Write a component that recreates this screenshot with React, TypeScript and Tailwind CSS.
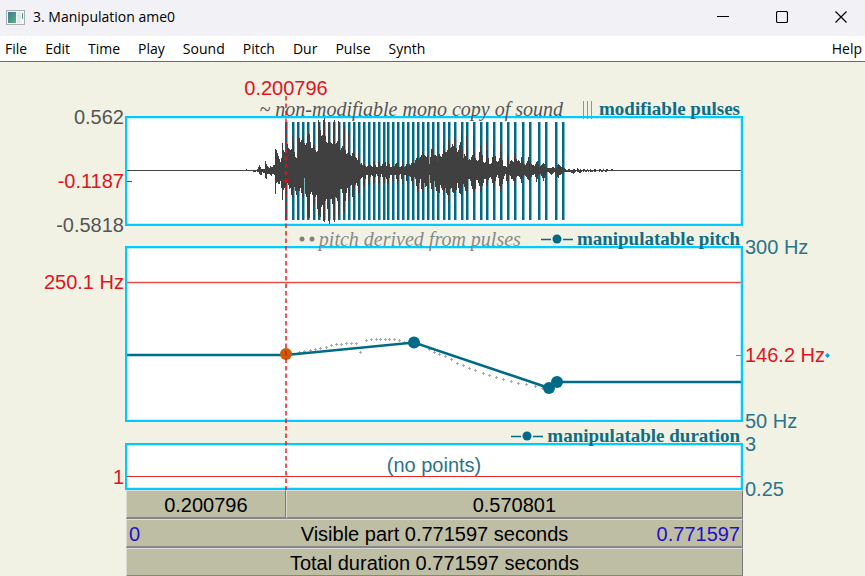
import type { ReactNode } from 'react';

const SANS = "font-['Liberation_Sans',Arial,sans-serif]";
const SERIF = "font-['Liberation_Serif','Times_New_Roman',serif]";

const MENUS = ['File', 'Edit', 'Time', 'Play', 'Sound', 'Pitch', 'Dur', 'Pulse', 'Synth'];

const PLOT_WIDTH = 618;
const CURSOR_X = 161;
const cursorLeft = `${(CURSOR_X / PLOT_WIDTH) * 100}%`;
const beforeCursor = `${((CURSOR_X - 1) / PLOT_WIDTH) * 100}%`;

// glottal pulse positions, in plot units
const PULSES = [
  160, 167, 172, 177, 182, 188, 193, 198, 203, 208, 213, 218, 223, 228, 233, 238, 243, 248, 253, 258, 262, 267, 272,
  277, 282, 287, 292, 297, 302, 307, 312, 318, 323, 329, 336, 341, 348, 355, 361, 368, 375, 382, 389, 397, 404, 413,
  420, 430, 437,
];

// first column of the sampled waveform
const WAVE_START = 132;

const WAVE_UP = [
  1, 3, 5, 3, 1, 1, 1, 1, 9, 6, 4, 3, 2, 4, 3, 3, 5, 5, 21, 20, 17, 14, 11, 8, 12, 27, 20, 18, 17, 17, 26, 22, 21, 20,
  21, 34, 28, 18, 13, 12, 13, 33, 32, 28, 30, 31, 33, 27, 25, 27, 34, 38, 36, 28, 22, 22, 25, 25, 20, 18, 19, 50, 48,
  40, 34, 35, 50, 52, 34, 28, 27, 48, 45, 28, 27, 26, 48, 50, 26, 27, 29, 49, 46, 20, 22, 24, 23, 43, 20, 16, 17, 38,
  18, 15, 14, 17, 32, 18, 13, 12, 10, 14, 10, 6, 7, 5, 4, 6, 4, 3, 4, 5, 8, 5, 4, 3, 8, 9, 5, 3, 3, 8, 9, 4, 4, 6, 9,
  7, 8, 4, 6, 9, 6, 3, 3, 4, 3, 4, 6, 7, 8, 5, 3, 3, 4, 8, 5, 3, 4, 6, 7, 4, 6, 5, 7, 10, 8, 7, 10, 12, 13, 10, 12,
  13, 15, 18, 17, 15, 14, 13, 16, 14, 6, 13, 21, 22, 20, 15, 15, 14, 8, 16, 16, 14, 13, 16, 25, 20, 18, 18, 20, 30,
  25, 22, 23, 26, 24, 32, 23, 22, 18, 20, 25, 28, 37, 20, 12, 16, 14, 35, 22, 10, 11, 10, 13, 15, 34, 18, 12, 10, 9,
  10, 18, 25, 20, 15, 8, 7, 8, 29, 20, 12, 6, 6, 7, 13, 22, 14, 14, 9, 8, 9, 12, 26, 18, 10, 4, 4, 4, 3, 16, 13, 6,
  9, 10, 9, 8, 17, 13, 11, 9, 10, 9, 7, 13, 9, 6, 6, 5, 7, 9, 13, 10, 7, 6, 5, 5, 4, 6, 8, 9, 5, 3, 4, 5, 6, 7, 6,
  4, 3, 2, 2, 2, 2, 2, 3, 3, 2, 1, 2, 5, 6, 5, 4, 3, 3, 2, 2, 1, 0, 0, 1, 1, 0, 0, 0, 1, 1, 0, 0, 2, 1, 0, 1, 0, 0,
  1, 1, 0, 0, 1, 0, 0, 1, 0, 0, 0, 1, 1, 0, 0, 0, 1, 1, 0, 0, 1, 0, 0, 1, 1, 0, 0, 0, 1, 1,
];

const WAVE_DOWN = [
  1, 1, 3, 4, 4, 1, 2, 2, 7, 8, 3, 3, 3, 4, 5, 3, 3, 4, 23, 12, 11, 13, 13, 10, 17, 29, 19, 17, 18, 22, 12, 14, 18,
  17, 24, 26, 19, 16, 20, 24, 18, 20, 20, 17, 22, 26, 27, 7, 23, 26, 45, 48, 47, 23, 21, 24, 40, 34, 26, 24, 38, 45,
  44, 46, 36, 34, 50, 51, 30, 28, 38, 50, 54, 28, 28, 33, 38, 51, 26, 27, 30, 46, 40, 18, 18, 22, 40, 42, 30, 22, 17,
  30, 25, 15, 14, 26, 28, 18, 14, 12, 15, 24, 22, 8, 7, 6, 14, 16, 8, 4, 4, 13, 15, 6, 4, 5, 12, 12, 6, 3, 5, 14, 12,
  6, 3, 6, 11, 12, 6, 8, 14, 13, 7, 4, 4, 10, 9, 4, 4, 8, 13, 10, 4, 3, 8, 13, 6, 4, 4, 10, 11, 5, 5, 6, 10, 15, 9,
  6, 8, 15, 18, 20, 12, 8, 18, 21, 17, 12, 16, 15, 20, 17, 4, 12, 18, 20, 15, 10, 16, 20, 20, 21, 22, 14, 17, 19, 24,
  20, 17, 22, 24, 31, 24, 18, 17, 21, 22, 21, 24, 19, 12, 17, 22, 23, 25, 15, 13, 16, 20, 23, 20, 8, 8, 10, 15, 18,
  22, 20, 18, 9, 9, 12, 15, 21, 22, 15, 12, 8, 8, 14, 15, 9, 7, 6, 8, 12, 18, 15, 10, 6, 4, 7, 15, 21, 17, 13, 8, 5,
  3, 10, 14, 10, 4, 5, 8, 8, 10, 15, 10, 6, 5, 5, 6, 8, 12, 7, 5, 4, 5, 6, 8, 9, 10, 7, 6, 4, 4, 3, 6, 11, 8, 4, 3,
  3, 5, 7, 10, 7, 4, 2, 1, 1, 2, 3, 4, 3, 2, 1, 2, 4, 6, 7, 4, 4, 3, 3, 2, 1, 1, 1, 1, 1, 1, 1, 2, 2, 3, 2, 1, 0, 1,
  1, 2, 2, 1, 0, 1, 0, 1, 1, 0, 1, 0, 1, 1, 1, 0, 1, 1, 0, 0, 0, 1, 0, 1, 1, 0, 0, 1, 1, 0, 0,
];

const wavePath = WAVE_UP.map((up, i) => {
  const down = WAVE_DOWN[i] ?? 0;
  return `M${WAVE_START + i} ${54 - up}h1v${up + down + 1}h-1z`;
}).join('');

// pitch candidates measured between neighbouring pulses
const PITCH_DOTS = [
  [174, 106], [179, 105], [185, 104], [190, 103], [195, 102], [201, 101], [206, 99], [211, 98], [216, 98], [221, 97],
  [226, 97], [231, 97], [235, 106], [241, 94], [246, 93], [251, 93], [255, 93], [260, 93], [264, 93], [269, 93],
  [274, 94], [279, 96], [304, 103], [309, 106], [314, 108], [320, 110], [326, 113], [332, 117], [338, 119], [344, 122],
  [350, 124], [358, 127], [364, 129], [371, 131], [378, 133], [386, 135], [393, 137], [401, 138], [410, 140], [417, 142],
];

interface ChildrenProps {
  children: ReactNode;
}

const Legend = ({ children }: ChildrenProps) => (
  <div
    className={`relative z-10 col-start-2 flex items-end justify-end gap-5 whitespace-nowrap pr-[3px] text-[20px] leading-[14px] ${SERIF}`}
  >
    {children}
  </div>
);

const PointSymbol = () => (
  <svg className="h-[10px] w-8" viewBox="0 0 32 10" aria-hidden="true">
    <path d="M0 5.5h10M22 5.5h10" stroke="#006b87" strokeWidth="1.5" />
    <circle cx="16" cy="5" r="4.5" fill="#006b87" />
  </svg>
);

const Panel = ({ height, label, children }: ChildrenProps & { height: number; label: string }) => (
  <svg
    className="col-start-2 block w-full bg-white"
    height={height}
    viewBox={`0 0 ${PLOT_WIDTH} ${height}`}
    preserveAspectRatio="none"
    role="img"
    aria-label={label}
  >
    {children}
    <rect x="1" y="1" width={PLOT_WIDTH - 2} height={height - 2} fill="none" stroke="#00cbff" strokeWidth="2.5" />
  </svg>
);

const LeftScale = ({ children }: ChildrenProps) => (
  <div className="col-start-1 -my-[9px] flex flex-col items-end pr-px">{children}</div>
);

const RightScale = ({ children }: ChildrenProps) => (
  <div className="col-start-3 -my-[9px] flex flex-col items-start pl-[2px] text-[#2b7489]">{children}</div>
);

const BAR =
  'h-[29px] border-b-2 border-l border-r border-t border-b-[#85858a] border-l-[#dcdcd4] border-r-[#77777f] border-t-[#dcdcd4] bg-[#bebea5] pt-[2px] leading-6';

const App = () => {
  return (
    <div className="flex min-h-screen flex-col bg-[#f2f2e4] text-black">
      <header className="flex h-9 items-center bg-[#f2f1f6] pl-[6px] font-['Open_Sans','Noto_Sans',sans-serif]">
        <svg className="h-4 w-[19px]" viewBox="0 0 19 16" aria-hidden="true">
          <defs>
            <linearGradient id="thumb" x1="0" y1="0" x2="1" y2="1">
              <stop offset="0" stopColor="#3f7899" />
              <stop offset="1" stopColor="#5fae7e" />
            </linearGradient>
          </defs>
          <rect x="0.5" y="0.5" width="18" height="14" fill="#f4f7f8" stroke="#a8adb0" />
          <rect x="2" y="2" width="8" height="11" fill="url(#thumb)" />
          <rect x="11" y="2" width="4" height="11" fill="#e3e8ec" />
          <path d="M16.5 3v6" stroke="#4a9a86" />
        </svg>
        <h1 className="ml-2 grow pb-[2px] text-sm">3. Manipulation ame0</h1>
        <div className="flex items-center gap-[47px] pr-[18px] pb-[2px]">
          <button type="button" aria-label="Minimize">
            <svg className="block size-3" viewBox="0 0 12 12">
              <path d="M0 5.5h12" stroke="#000" />
            </svg>
          </button>
          <button type="button" aria-label="Maximize">
            <svg className="block size-3" viewBox="0 0 12 12">
              <rect x="0.5" y="0.5" width="11" height="11" rx="1.5" fill="none" stroke="#000" strokeWidth="1.2" />
            </svg>
          </button>
          <button type="button" aria-label="Close">
            <svg className="block size-3" viewBox="0 0 12 12">
              <path d="M0.5 0.5l11 11M11.5 0.5l-11 11" stroke="#000" strokeWidth="1.2" />
            </svg>
          </button>
        </div>
      </header>

      <nav className="flex h-[26px] items-center gap-[18px] border-b border-[#6c6c70] bg-white pl-[5px] pr-[3px] font-['Open_Sans','Noto_Sans',sans-serif] text-sm">
        {MENUS.map((name) => (
          <button key={name} type="button">
            {name}
          </button>
        ))}
        <button type="button" className="ml-auto">
          Help
        </button>
      </nav>

      <main className={`relative text-[20px] leading-5 ${SANS}`}>
        <div className="grid grid-cols-[125px_1fr_122px] grid-rows-[54px_110px_20px_176px_21px_47px]">
          <Legend>
            <span className="italic text-[#555]">~ non-modifiable mono copy of sound</span>
            <span className="flex gap-[6px] text-[19px] font-bold text-[#0f6c85]">
              <svg className="h-[14px] w-[10px] overflow-visible" viewBox="0 0 10 14" aria-hidden="true">
                <path d="M0.5 -1v18M4.5 -1v18M8.5 -1v18" stroke="#6f9fb0" />
              </svg>
              modifiable pulses
            </span>
          </Legend>

          <LeftScale>
            <span className="text-[#555]">0.562</span>
            <span className="mt-[44px] text-[#e0141e]">-0.1187</span>
            <span className="mt-auto text-[#555]">-0.5818</span>
          </LeftScale>
          <Panel height={110} label="Sound with pulses">
            {PULSES.map((x) => (
              <rect key={x} x={x} y="6" width="2.5" height="98" fill="#006b87" />
            ))}
            <path d={`M2 54.5h${PLOT_WIDTH - 4}`} stroke="#444" />
            <path d="M121 53h1v2h-1zM128 54h3v2h-3z" fill="#404040" />
            <path d={wavePath} fill="#404040" />
            <path d="M2 65.5h5M158 64.5h6" stroke="#d01414" />
          </Panel>

          <Legend>
            <span className="flex items-center gap-1 italic text-[#888]">
              <svg className="h-[6px] w-4" viewBox="0 0 16 6" aria-hidden="true">
                <circle cx="3" cy="3" r="2.5" fill="#808080" />
                <circle cx="13" cy="3" r="2.5" fill="#808080" />
              </svg>
              pitch derived from pulses
            </span>
            <span className="flex items-center gap-1 text-[19px] font-bold text-[#0f6c85]">
              <PointSymbol />
              manipulatable pitch
            </span>
          </Legend>

          <LeftScale>
            <span className="mt-[35px] text-[#e0141e]">250.1 Hz</span>
          </LeftScale>
          <Panel height={176} label="Pitch">
            <path d={`M2 36.5h${PLOT_WIDTH - 4}`} stroke="#e84c4c" strokeWidth="1.6" />
            {PITCH_DOTS.map(([x, y]) => (
              <path key={x} d={`M${x - 1} ${y + 0.5}h3M${x + 0.5} ${y - 1}v3`} stroke="#aaa" />
            ))}
            <path
              d={`M2 109H161L289 96.5L424 142L432 136H${PLOT_WIDTH}`}
              fill="none"
              stroke="#006b87"
              strokeWidth="2.5"
            />
            <circle cx="289" cy="96.5" r="6" fill="#006b87" />
            <circle cx="424" cy="142" r="6" fill="#006b87" />
            <circle cx="432" cy="136" r="6" fill="#006b87" />
            <circle cx="161" cy="108" r="6" fill="#c85c08" />
            <path d="M611 109.5h5" stroke="#0aa5e0" />
          </Panel>
          <RightScale>
            <span>300 Hz</span>
            <span className="mt-[88px] flex items-center text-[#e0141e]">
              146.2 Hz
              <svg className="size-[5px]" viewBox="0 0 5 5" aria-hidden="true">
                <path d="M2.5 0L5 2.5L2.5 5L0 2.5z" fill="#0aa5e0" />
              </svg>
            </span>
            <span className="mt-auto">50 Hz</span>
          </RightScale>

          <Legend>
            <span className="flex items-center gap-1 text-[19px] font-bold text-[#0f6c85]">
              <PointSymbol />
              manipulatable duration
            </span>
          </Legend>

          <LeftScale>
            <span className="mt-auto mb-[12px] text-[#e0141e]">1</span>
          </LeftScale>
          <Panel height={47} label="Duration, no points">
            <path d={`M2 33.5h${PLOT_WIDTH - 4}`} stroke="#e02c2c" />
            <text x="309" y="29" textAnchor="middle" fill="#2b7489">
              (no points)
            </text>
          </Panel>
          <RightScale>
            <span>3</span>
            <span className="mt-auto">0.25</span>
          </RightScale>
        </div>

        <div className="ml-[126px] mr-[122px]">
          <div className="flex">
            <button type="button" className={`${BAR} shrink-0`} style={{ width: beforeCursor }}>
              0.200796
            </button>
            <button type="button" className={`${BAR} grow`}>
              0.570801
            </button>
          </div>
          <button type="button" className={`${BAR} grid w-full grid-cols-[1fr_auto_1fr] px-[2px]`}>
            <span className="text-left text-[#2310c8]">0</span>
            <span>Visible part 0.771597 seconds</span>
            <span className="text-right text-[#2310c8]">0.771597</span>
          </button>
          <button type="button" className={`${BAR} block w-full`}>
            Total duration 0.771597 seconds
          </button>
        </div>

        {/* cursor line with its time, drawn across all three panels */}
        <div className="pointer-events-none absolute left-[125px] right-[122px] top-4 z-20">
          <div className="flex w-0 flex-col items-center" style={{ marginLeft: cursorLeft }}>
            <span className="text-[#e0141e]">0.200796</span>
            <svg className="-mt-[2px] h-[394px] w-[2px]" viewBox="0 0 2 394" aria-hidden="true">
              <path d="M1 0v394" stroke="#e8101c" strokeWidth="1.4" strokeDasharray="4.5 3" />
            </svg>
          </div>
        </div>
      </main>
    </div>
  );
};

export default App;
